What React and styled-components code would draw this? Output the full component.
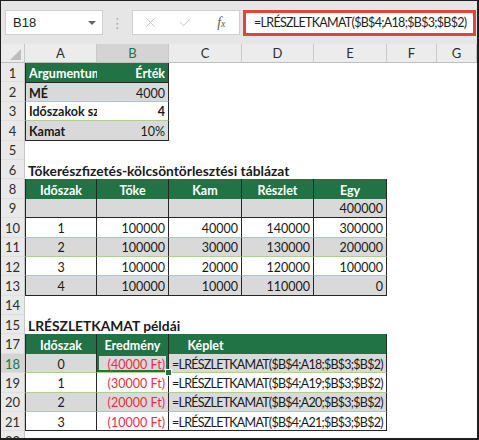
import React from "react";
import styled, { createGlobalStyle, css } from "styled-components";
import { X, Check } from "lucide-react";

const GREEN = "#217346";
const DARK = "1px solid #262626";
const LIGHT = "1px solid #a9d08e";
const COLS = "24px 72px 72px 73px 72px 73px 50px 40px";

const GlobalStyle = createGlobalStyle`
  body {
    margin: 0;
    background: #fff;
  }
`;

const Frame = styled.div`
  width: 479px;
  height: 440px;
  box-sizing: border-box;
  border: 1px solid #1f1f1f;
  border-right-width: 2px;
  border-bottom-width: 2px;
  overflow: hidden;
  display: flex;
  flex-direction: column;
  background: #fff;
  font-family: "Lato", "Liberation Sans", sans-serif;
`;

const TopBar = styled.div`
  height: 43px;
  flex-shrink: 0;
  display: flex;
  align-items: center;
  padding-left: 4px;
  background: #e6e6e6;
`;

const NameBox = styled.div`
  width: 98px;
  height: 25px;
  box-sizing: border-box;
  border: 1px solid #cfcfcf;
  background: #fff;
  display: flex;
  align-items: center;
  justify-content: space-between;
  padding: 0 6px 0 7px;
  font: 13px "Liberation Sans", sans-serif;
  color: #222;
`;

const Caret = styled.span`
  width: 0;
  height: 0;
  border-left: 4px solid transparent;
  border-right: 4px solid transparent;
  border-top: 4px solid #666;
`;

const Dots = styled.span`
  width: 29px;
  text-align: center;
  color: #a8a8a8;
  font: 14px "DejaVu Sans", sans-serif;
`;

const FxBox = styled.div`
  width: 108px;
  height: 25px;
  box-sizing: border-box;
  border: 1px solid #cfcfcf;
  background: #fff;
  display: grid;
  grid-template-columns: repeat(3, 1fr);
  align-items: center;
  justify-items: center;
  color: #c2c2c2;
`;

const Fx = styled.span`
  font: italic 14px "Liberation Serif", serif;
  color: #5a5a5a;
  & small {
    font-size: 10px;
  }
`;

const FormulaBar = styled.div`
  margin-left: 3px;
  width: 233px;
  height: 26px;
  box-sizing: border-box;
  border: 3px solid #e4433d;
  background: #fff;
  padding-left: 8px;
  display: flex;
  align-items: center;
  font: 12.5px "Lato", "Liberation Sans", sans-serif;
  letter-spacing: -0.7px;
  color: #1e1e1e;
  white-space: nowrap;
  overflow: hidden;
`;

const Row = styled.div`
  display: grid;
  grid-template-columns: ${COLS};
  height: ${(p) => (p.$head ? "18px" : "19.4px")};
  flex-shrink: 0;
  ${(p) =>
    p.$head &&
    css`
      background: #ececec;
      border-bottom: 1px solid #bfbfbf;
    `}
`;

const Corner = styled.div`
  position: relative;
  border-right: 1px solid #c9c9c9;
  &::after {
    content: "";
    position: absolute;
    right: 3px;
    bottom: 2px;
    border-left: 11px solid transparent;
    border-bottom: 11px solid #bdbdbd;
  }
`;

const ColHead = styled.div`
  display: flex;
  align-items: center;
  justify-content: center;
  border-right: 1px solid #c9c9c9;
  font-size: 13px;
  color: #2e2e2e;
  ${(p) =>
    p.$active &&
    css`
      background: #d4d4d4;
      color: ${GREEN};
    `}
`;

const RowHead = styled.div`
  display: flex;
  align-items: center;
  justify-content: center;
  padding-top: 1px;
  background: ${(p) => (p.$active ? "#d4d4d4" : "#e9e9e9")};
  color: ${(p) => (p.$active ? GREEN : "#2d2d2d")};
  border-right: 1px solid #c6c6c6;
  border-bottom: 1px solid #dedede;
  font-size: 13px;
`;

const fills = { green: GREEN, grey: "#d9d9d9", white: "#fff" };

const Cell = styled.div`
  grid-column: span ${(p) => p.$span || 1};
  box-sizing: border-box;
  display: flex;
  align-items: center;
  justify-content: ${(p) =>
    p.$align === "right" ? "flex-end" : p.$align === "center" ? "center" : "flex-start"};
  padding: 2px 3px 0;
  white-space: nowrap;
  overflow: ${(p) => (p.$clip ? "hidden" : "visible")};
  background: ${(p) => fills[p.$bg] || "transparent"};
  color: ${(p) => p.$color || (p.$bg === "green" ? "#fff" : "#1a1a1a")};
  font-size: ${(p) => (p.$title ? "13.8px" : "12.5px")};
  font-weight: ${(p) => (p.$bold ? 700 : 400)};
  letter-spacing: ${(p) => (p.$tight ? "-0.75px" : "normal")};
  border-left: ${(p) => p.$bl || "none"};
  border-right: ${(p) => p.$br || "none"};
  border-top: ${(p) => p.$bt || "none"};
  border-bottom: ${(p) => p.$bb || "none"};
  ${(p) =>
    p.$selected &&
    css`
      position: relative;
      box-shadow: inset 0 0 0 2px ${GREEN};
      &::after {
        content: "";
        position: absolute;
        right: -4px;
        bottom: -4px;
        width: 5px;
        height: 5px;
        background: ${GREEN};
        border: 1px solid #fff;
        z-index: 2;
      }
    `}
`;

const RED = "#ec2c44";

const amort = [
  [1, 100000, 40000, 140000, 300000],
  [2, 100000, 30000, 130000, 200000],
  [3, 100000, 20000, 120000, 100000],
  [4, 100000, 10000, 110000, 0],
];

const examples = [
  [0, "(40000 Ft)", "=LRÉSZLETKAMAT($B$4;A18;$B$3;$B$2)"],
  [1, "(30000 Ft)", "=LRÉSZLETKAMAT($B$4;A19;$B$3;$B$2)"],
  [2, "(20000 Ft)", "=LRÉSZLETKAMAT($B$4;A20;$B$3;$B$2)"],
  [3, "(10000 Ft)", "=LRÉSZLETKAMAT($B$4;A21;$B$3;$B$2)"],
];

const rows = [
  {
    n: 1,
    cells: [
      { t: "Argumentum", bg: "green", bold: true, bl: DARK, clip: true },
      { t: "Érték", bg: "green", bold: true, align: "right", br: DARK },
    ],
  },
  {
    n: 2,
    cells: [
      { t: "MÉ", bg: "grey", bold: true, bl: DARK, bt: DARK, bb: LIGHT },
      { t: "4000", bg: "grey", align: "right", br: DARK, bt: DARK, bb: LIGHT },
    ],
  },
  {
    n: 3,
    cells: [
      { t: "Időszakok száma", bg: "white", bold: true, bl: DARK, bb: LIGHT, clip: true },
      { t: "4", bg: "white", bold: true, align: "right", br: DARK, bb: LIGHT },
    ],
  },
  {
    n: 4,
    cells: [
      { t: "Kamat", bg: "grey", bold: true, bl: DARK, bb: DARK },
      { t: "10%", bg: "grey", align: "right", br: DARK, bb: DARK },
    ],
  },
  { n: 5, cells: [] },
  {
    n: 6,
    cells: [{ t: "Tőkerészfizetés-kölcsöntörlesztési táblázat", bold: true, title: true, span: 7 }],
  },
  {
    n: 8,
    cells: ["Időszak", "Tőke", "Kam", "Részlet", "Egy"].map((t, i) => ({
      t,
      bg: "green",
      bold: true,
      align: "center",
      bl: i === 0 ? DARK : undefined,
      br: DARK,
    })),
  },
  {
    n: 9,
    cells: ["", "", "", "", "400000"].map((t, i) => ({
      t,
      bg: "grey",
      align: "right",
      bl: i === 0 ? DARK : undefined,
      br: DARK,
      bb: DARK,
    })),
  },
  ...amort.map((vals, r) => ({
    n: 10 + r,
    cells: vals.map((v, i) => ({
      t: String(v),
      bg: r % 2 ? "grey" : "white",
      align: i === 0 ? "center" : "right",
      bl: i === 0 ? DARK : undefined,
      br: DARK,
      bb: r === amort.length - 1 ? DARK : LIGHT,
    })),
  })),
  { n: 14, cells: [] },
  { n: 15, cells: [{ t: "LRÉSZLETKAMAT példái", bold: true, title: true, span: 7 }] },
  {
    n: 17,
    cells: [
      { t: "Időszak", bg: "green", bold: true, align: "center", bl: DARK, br: DARK },
      { t: "Eredmény", bg: "green", bold: true, align: "center", br: DARK },
      { t: "Képlet", bg: "green", bold: true, align: "center" },
      { t: "", bg: "green" },
      { t: "", bg: "green", br: DARK },
    ],
  },
  ...examples.map(([p, res, f], r) => {
    const bg = r % 2 ? "white" : "grey";
    const bb = r === examples.length - 1 ? DARK : LIGHT;
    return {
      n: 18 + r,
      active: r === 0,
      cells: [
        { t: String(p), bg, align: "center", bl: DARK, br: DARK, bb },
        { t: res, bg, align: "right", color: RED, br: DARK, bb, selected: r === 0 },
        { t: f, bg, span: 3, br: DARK, bb, tight: true },
      ],
    };
  }),
  { n: 22, cells: [] },
];

function SheetRow({ row }) {
  const used = row.cells.reduce((sum, c) => sum + (c.span || 1), 0);
  const blanks = Array.from({ length: Math.max(0, 7 - used) });
  return (
    <Row>
      <RowHead $active={row.active}>{row.n}</RowHead>
      {row.cells.map((c, i) => (
        <Cell
          key={i}
          $span={c.span}
          $align={c.align}
          $bg={c.bg}
          $bold={c.bold}
          $title={c.title}
          $color={c.color}
          $clip={c.clip}
          $tight={c.tight}
          $bl={c.bl}
          $br={c.br}
          $bt={c.bt}
          $bb={c.bb}
          $selected={c.selected}
        >
          {c.t}
        </Cell>
      ))}
      {blanks.map((_, i) => (
        <Cell key={"b" + i} />
      ))}
    </Row>
  );
}

export default function App() {
  return (
    <>
      <GlobalStyle />
      <Frame>
        <TopBar>
          <NameBox>
            B18
            <Caret />
          </NameBox>
          <Dots>⋮</Dots>
          <FxBox>
            <X size={15} strokeWidth={1.6} />
            <Check size={15} strokeWidth={1.6} />
            <Fx>
              f<small>x</small>
            </Fx>
          </FxBox>
          <FormulaBar>=LRÉSZLETKAMAT($B$4;A18;$B$3;$B$2)</FormulaBar>
        </TopBar>
        <Row $head>
          <Corner />
          {["A", "B", "C", "D", "E", "F", "G"].map((l) => (
            <ColHead key={l} $active={l === "B"}>
              {l}
            </ColHead>
          ))}
        </Row>
        {rows.map((row) => (
          <SheetRow key={row.n} row={row} />
        ))}
      </Frame>
    </>
  );
}
